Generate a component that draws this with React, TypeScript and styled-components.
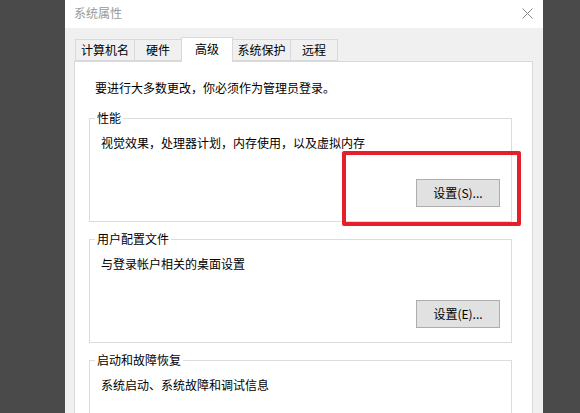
import React, { FC } from 'react';
import styled, { createGlobalStyle } from 'styled-components';

const GlobalStyle = createGlobalStyle`
  html, body {
    margin: 0;
    padding: 0;
    background: #4a4a4a;
  }
  body {
    font-family: "Noto Sans CJK SC", "Noto Sans", "Liberation Sans", sans-serif;
    font-size: 12px;
    color: #000;
  }
`;

const Screen = styled.div`
  position: relative;
  display: flex;
  height: 413px;
  padding-left: 65px;
  overflow: hidden;
  background: #4a4a4a;
  box-sizing: border-box;
`;

const Dialog = styled.div`
  width: 478px;
  display: flex;
  flex-direction: column;
  background: #f0f0f0;
`;

const TitleBar = styled.div`
  height: 28px;
  flex-shrink: 0;
  display: flex;
  align-items: center;
  justify-content: space-between;
  padding: 0 10px 2px 9px;
  box-sizing: border-box;
  background: #fff;
  color: #999;
  line-height: 16px;
`;

const Body = styled.div`
  flex: 1;
  display: flex;
  flex-direction: column;
  padding: 9px 10px 0 9px;
`;

const TabStrip = styled.div`
  display: flex;
  align-items: flex-end;
  height: 24px;
  padding-left: 1px;
`;

const Tab = styled.div<{ $w: number; $active?: boolean }>`
  width: ${p => p.$w}px;
  height: ${p => (p.$active ? 25 : 22)}px;
  margin-bottom: ${p => (p.$active ? -1 : 0)}px;
  margin-right: -1px;
  box-sizing: border-box;
  display: flex;
  align-items: center;
  justify-content: center;
  padding-bottom: ${p => (p.$active ? 3 : 0)}px;
  border: 1px solid #d9d9d9;
  border-bottom: ${p => (p.$active ? 'none' : '1px solid #d9d9d9')};
  background: ${p => (p.$active ? '#fff' : '#f0f0f0')};
  position: relative;
  z-index: ${p => (p.$active ? 2 : 0)};
  line-height: 16px;
`;

const Panel = styled.div`
  flex: 1;
  background: #fff;
  border: 1px solid #d9d9d9;
  border-bottom: none;
  padding: 18px 20px 0 14px;
`;

const Intro = styled.div`
  padding-left: 6px;
  line-height: 16px;
  margin-bottom: 14px;
`;

const GroupBox = styled.fieldset`
  margin: 0 0 9px;
  padding: 0;
  min-width: 0;
  border: 1px solid #dcdcdc;
`;

const Legend = styled.legend`
  margin-left: 5px;
  padding: 0 2px;
  line-height: 16px;
`;

const GroupBody = styled.div`
  padding: 9px 11px 14px 11px;
`;

const GroupText = styled.div`
  line-height: 16px;
`;

const ButtonRow = styled.div`
  display: flex;
  justify-content: flex-end;
  margin-top: 28px;
  height: 28px;
`;

const Button = styled.button`
  width: 84px;
  height: 28px;
  padding: 0;
  background: #e1e1e1;
  border: 1px solid #adadad;
  font-family: inherit;
  font-size: 12px;
  color: #000;
  line-height: 16px;
`;

const Highlight = styled.div`
  position: absolute;
  left: 342px;
  top: 151px;
  width: 179px;
  height: 75px;
  box-sizing: border-box;
  border: 4px solid #e3202b;
  border-radius: 2px;
  pointer-events: none;
`;

const CloseIcon: FC = () => (
  <svg width="11" height="11" viewBox="0 0 11 11">
    <path d="M0.5 0.5 L10.5 10.5 M10.5 0.5 L0.5 10.5" stroke="#8a8a8a" strokeWidth="1" fill="none" />
  </svg>
);

const tabs = [
  { label: '计算机名', w: 60 },
  { label: '硬件', w: 48 },
  { label: '高级', w: 52, active: true },
  { label: '系统保护', w: 59 },
  { label: '远程', w: 48 },
];

// the third group's button sits below the visible area, so it is left out
const groups: { title: string; text: string; button?: string }[] = [
  { title: '性能', text: '视觉效果，处理器计划，内存使用，以及虚拟内存', button: '设置(S)...' },
  { title: '用户配置文件', text: '与登录帐户相关的桌面设置', button: '设置(E)...' },
  { title: '启动和故障恢复', text: '系统启动、系统故障和调试信息' },
];

const App: FC = () => {
  return (
    <Screen>
      <GlobalStyle />
      <Dialog>
        <TitleBar>
          <span>系统属性</span>
          <CloseIcon />
        </TitleBar>
        <Body>
          <TabStrip>
            {tabs.map(t => (
              <Tab key={t.label} $w={t.w} $active={t.active}>
                {t.label}
              </Tab>
            ))}
          </TabStrip>
          <Panel>
            <Intro>要进行大多数更改，你必须作为管理员登录。</Intro>
            {groups.map(g => (
              <GroupBox key={g.title}>
                <Legend>{g.title}</Legend>
                <GroupBody>
                  <GroupText>{g.text}</GroupText>
                  <ButtonRow>
                    {g.button && <Button>{g.button}</Button>}
                  </ButtonRow>
                </GroupBody>
              </GroupBox>
            ))}
          </Panel>
        </Body>
      </Dialog>
      <Highlight />
    </Screen>
  );
};

export default App;
